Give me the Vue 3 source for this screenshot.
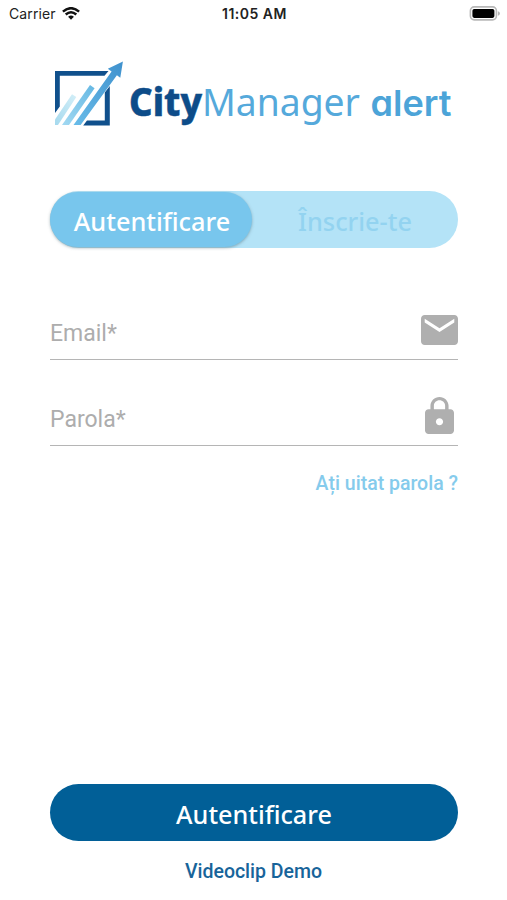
<script setup>
import { ref } from 'vue'

const tab = ref('login')
const email = ref('')
const password = ref('')
</script>

<template>
  <main class="screen">
    <header class="status">
      <div class="carrier">
        <span>Carrier</span>
        <svg class="wifi" viewBox="0 0 18 13" width="18" height="13">
          <path d="M.9 4.6Q9-2.2 17.1 4.6" />
          <path d="M3.7 7.5Q9 3 14.3 7.5" />
          <path class="dot" d="M6.1 9.7Q9 7.4 11.9 9.7L9 12.7Z" />
        </svg>
      </div>
      <span class="time">11:05 AM</span>
      <svg class="battery" viewBox="0 0 31 15" width="31" height="15">
        <rect x="1.4" y="0.9" width="26" height="13" rx="3.8" fill="#fff" stroke="#b8b8b8" stroke-width="1.6" />
        <rect x="3.4" y="2.9" width="22" height="9" rx="1.8" fill="#000" />
        <path d="M28.9 5.2q2 .6 2 2.3t-2 2.3z" fill="#b5b5b5" />
      </svg>
    </header>

    <svg class="logo" viewBox="50 55 408 80" width="408" height="80">
      <defs>
        <linearGradient id="pale" x1="0" y1="1" x2="1" y2="0">
          <stop offset="0" stop-color="#a5d9ee" /><stop offset="1" stop-color="#d3eff8" />
        </linearGradient>
        <linearGradient id="mid" x1="0" y1="1" x2="1" y2="0">
          <stop offset="0" stop-color="#a2d9f2" /><stop offset="1" stop-color="#65b8e3" />
        </linearGradient>
        <linearGradient id="deep" x1="0" y1="1" x2="1" y2="0">
          <stop offset="0" stop-color="#69bce9" /><stop offset="1" stop-color="#3f91cd" />
        </linearGradient>
      </defs>
      <path d="M55 71H108.5L104.5 75.8H59.8V106.5L55 113Z" fill="#10508c" />
      <path d="M109.8 86V125.5H83.2L87 120.6H104.8V92.5Z" fill="#10508c" />
      <path d="M55 119.5L72 94.2L76.3 97L58 125H55Z" fill="url(#pale)" />
      <path d="M62 125L90 85L94.6 88.2L69 125Z" fill="url(#mid)" />
      <path d="M73.5 125L111.6 71.6L107.8 68.7L122.9 61.5L120.3 77.8L116.9 75.3L80.6 125Z" fill="url(#deep)" />
      <text class="city" x="129" y="116.3" textLength="73" lengthAdjust="spacingAndGlyphs">City</text>
      <text class="manager" x="202" y="116.3" textLength="158" lengthAdjust="spacingAndGlyphs">Manager</text>
      <text class="alert" x="370.5" y="116.3" textLength="81" lengthAdjust="spacingAndGlyphs">alert</text>
    </svg>

    <nav class="tabs">
      <button class="tab" :class="{ active: tab === 'login' }" @click="tab = 'login'"><span>Autentificare</span></button>
      <button class="tab" :class="{ active: tab === 'signup' }" @click="tab = 'signup'"><span>Înscrie-te</span></button>
    </nav>

    <form class="form" @submit.prevent>
      <label class="field">
        <input v-model="email" type="email" placeholder="Email*" />
        <svg viewBox="2 4 20 16" preserveAspectRatio="none" width="37" height="30">
          <path d="M20 4H4c-1.1 0-2 .9-2 2v12c0 1.1.9 2 2 2h16c1.1 0 2-.9 2-2V6c0-1.1-.9-2-2-2zm0 4l-8 5-8-5V6l8 5 8-5v2z" />
        </svg>
      </label>
      <label class="field password">
        <input v-model="password" type="password" placeholder="Parola*" />
        <svg class="lock" viewBox="4 1 16 21" preserveAspectRatio="none" width="29" height="37">
          <path d="M18 8h-1V6c0-2.76-2.24-5-5-5S7 3.24 7 6v2H6c-1.1 0-2 .9-2 2v10c0 1.1.9 2 2 2h12c1.1 0 2-.9 2-2V10c0-1.1-.9-2-2-2zm-6 9c-1.1 0-2-.9-2-2s.9-2 2-2 2 .9 2 2-.9 2-2 2zm3.1-9H8.9V6c0-1.71 1.39-3.1 3.1-3.1s3.1 1.39 3.1 3.1v2z" />
        </svg>
      </label>
      <a class="forgot">Ați uitat parola ?</a>
      <button class="submit"><span>Autentificare</span></button>
    </form>
    <a class="demo">Videoclip Demo</a>
  </main>
</template>

<style>
body { margin: 0; background: #fff; }
</style>

<style scoped>
.screen {
  box-sizing: border-box;
  width: 507px;
  height: 900px;
  display: flex;
  flex-direction: column;
  overflow: hidden;
  background: #fff;
  font-family: Roboto, sans-serif;
}
.status {
  height: 27px;
  padding: 0 7px 0 9px;
  display: grid;
  grid-template-columns: 1fr auto 1fr;
  align-items: center;
  font: 400 14px Inter, sans-serif;
  color: #222;
}
.carrier { display: flex; align-items: center; gap: 6px; letter-spacing: 0.12px; }
.wifi { fill: none; stroke: #111; stroke-width: 2.5; }
.wifi .dot { fill: #111; stroke: none; }
.time { font-weight: 600; letter-spacing: 0.5px; }
.battery { justify-self: end; }
.logo { display: block; margin: 28px 0 0 50px; }
.city { font: 800 39px "Noto Sans", sans-serif; fill: #0d4c89; stroke: #0d4c89; stroke-width: 0.5px; }
.manager { font: 400 39px "Noto Sans", sans-serif; fill: #55a9db; }
.alert { font: 600 35.5px Inter, sans-serif; font-feature-settings: "cv11"; fill: #4ca4d8; }
button { padding: 0; border: 0; cursor: pointer; }
.tabs {
  display: flex;
  height: 57px;
  margin: 56px 49px 0 50px;
  border-radius: 29px;
  background: #b4e3f7;
}
.tab {
  flex: 1;
  border-radius: 29px;
  background: transparent;
  font: 500 25.3px "Noto Sans", sans-serif;
  color: #93d3f0;
}
.tab span, .submit span { position: relative; top: 1px; }
.tab.active {
  flex: 0 0 202px;
  margin: 1px 0;
  padding-left: 2px;
  background: #78c6ed;
  color: #fff;
  box-shadow: 0 1px 3px rgba(80, 110, 120, 0.5);
}
.form { flex: 1; display: flex; flex-direction: column; margin: 52px 49px 0 50px; }
.field {
  box-sizing: border-box;
  height: 60px;
  display: flex;
  align-items: center;
  border-bottom: 1.5px solid #b5b5b5;
}
.field.password { height: 61px; margin-top: 25px; }
.field input {
  flex: 1;
  min-width: 0;
  padding: 7px 0 0;
  border: 0;
  outline: 0;
  background: transparent;
  font: 400 23px Roboto, sans-serif;
}
.field.password input { padding-top: 9px; }
.field input::placeholder { color: #adadad; opacity: 1; }
.field svg { fill: #afafaf; }
.field .lock { margin-right: 4px; }
.forgot { align-self: flex-end; margin-top: 26px; font-size: 19.5px; line-height: 24px; font-weight: 500; color: #85cbec; }
.submit {
  height: 57px;
  margin-top: auto;
  border-radius: 29px;
  background: #015f97;
  color: #fff;
  font: 500 25.2px "Noto Sans", sans-serif;
}
.demo { align-self: center; margin: 19px 0 16px; font-size: 19.5px; line-height: 24px; font-weight: 500; color: #17649a; }
</style>
